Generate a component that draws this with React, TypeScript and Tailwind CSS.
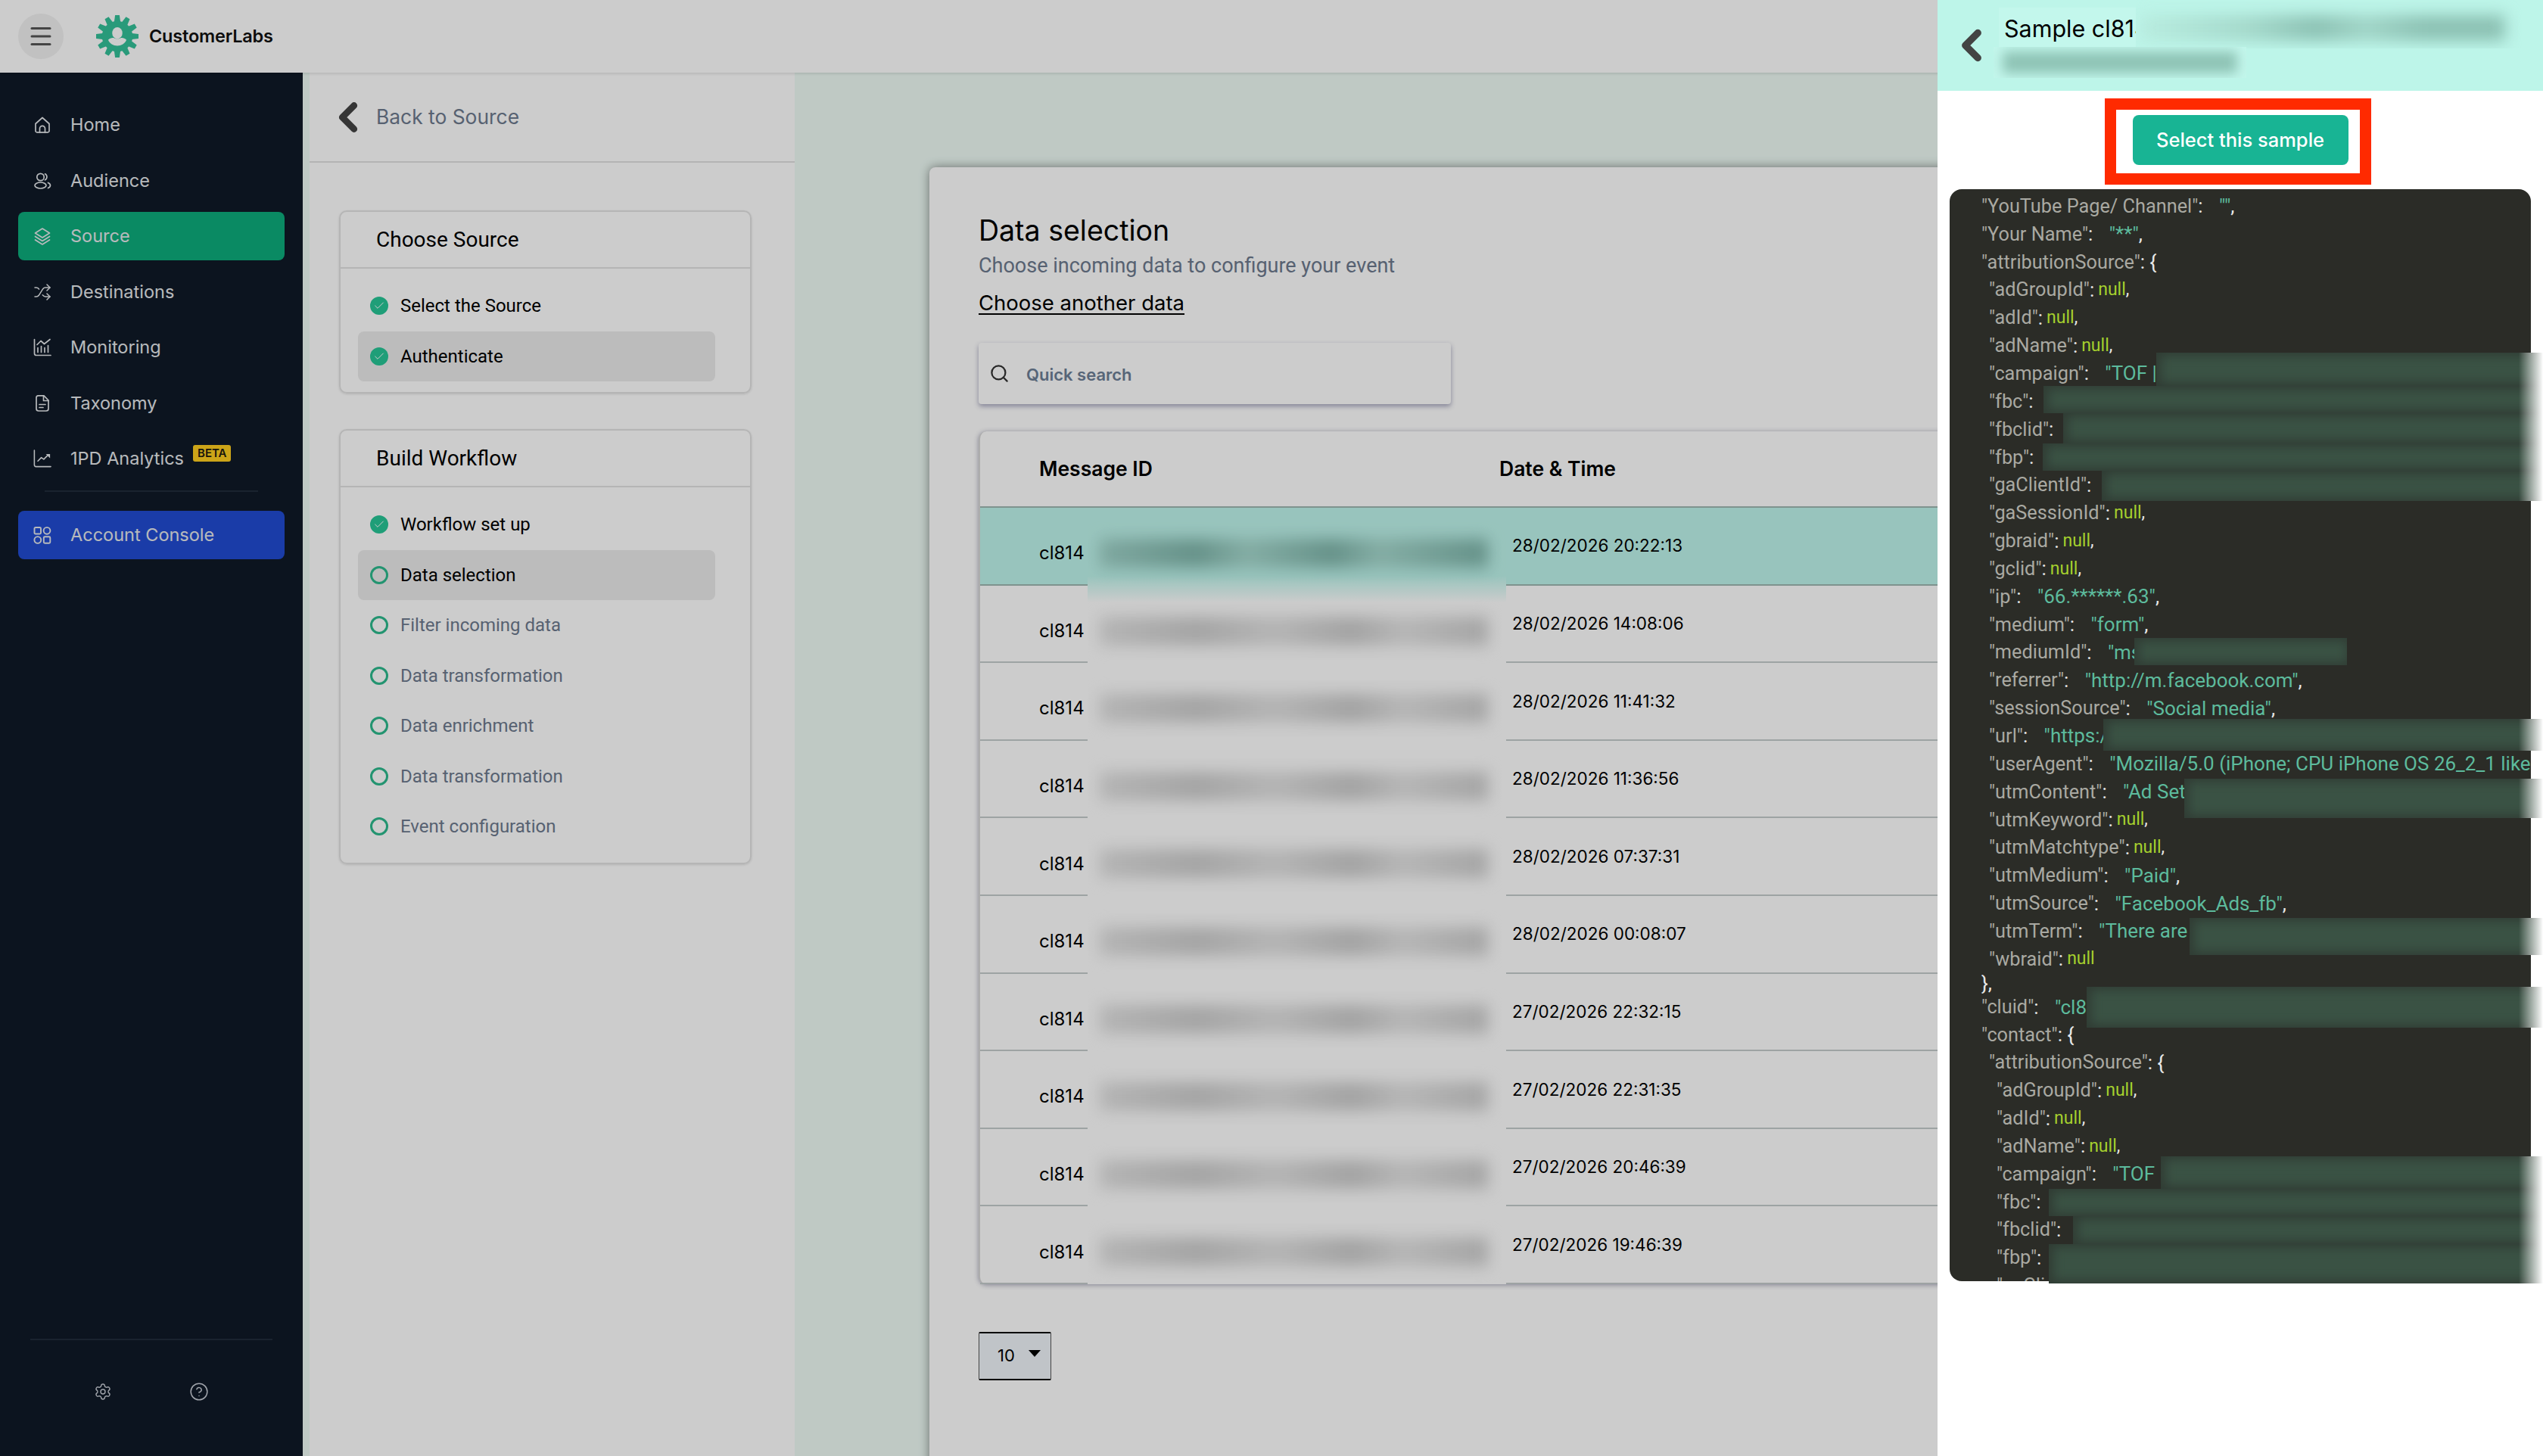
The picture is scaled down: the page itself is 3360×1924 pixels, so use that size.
import React from "react";
import { Settings, CircleHelp, Search, Menu, ChevronLeft, Check, Shuffle } from "lucide-react";

type Line = { i: number; k?: string; v?: string; t?: "s" | "n" | "o" | "b"; raw?: string; h?: string };

const json: Line[] = [
  { i: 0, k: "YouTube Page/ Channel", v: '""', t: "s" },
  { i: 0, k: "Your Name", v: '"**"', t: "s" },
  { i: 0, k: "attributionSource", t: "o" },
  { i: 1, k: "adGroupId", t: "n" },
  { i: 1, k: "adId", t: "n" },
  { i: 1, k: "adName", t: "n" },
  { i: 1, k: "campaign", v: '"TOF |', t: "b" },
  { i: 1, k: "fbc", t: "b" },
  { i: 1, k: "fbclid", t: "b" },
  { i: 1, k: "fbp", t: "b" },
  { i: 1, k: "gaClientId", t: "b" },
  { i: 1, k: "gaSessionId", t: "n" },
  { i: 1, k: "gbraid", t: "n" },
  { i: 1, k: "gclid", t: "n" },
  { i: 1, k: "ip", v: '"66.******.63"', t: "s" },
  { i: 1, k: "medium", v: '"form"', t: "s" },
  { i: 1, k: "mediumId", v: '"ms', t: "b" },
  { i: 1, k: "referrer", v: '"http://m.facebook.com"', t: "s" },
  { i: 1, k: "sessionSource", v: '"Social media"', t: "s" },
  { i: 1, k: "url", v: '"https:/', t: "b" },
  { i: 1, k: "userAgent", v: '"Mozilla/5.0 (iPhone; CPU iPhone OS 26_2_1 like', t: "b" },
  { i: 1, k: "utmContent", v: '"Ad Set', t: "b" },
  { i: 1, k: "utmKeyword", t: "n" },
  { i: 1, k: "utmMatchtype", t: "n" },
  { i: 1, k: "utmMedium", v: '"Paid"', t: "s" },
  { i: 1, k: "utmSource", v: '"Facebook_Ads_fb"', t: "s" },
  { i: 1, k: "utmTerm", v: '"There are', t: "b" },
  { i: 1, k: "wbraid", v: "null", t: "n" },
  { i: 0, raw: "}," },
  { i: 0, k: "cluid", v: '"cl8', t: "b", h: "h-[36px]" },
  { i: 0, k: "contact", t: "o" },
  { i: 1, k: "attributionSource", t: "o" },
  { i: 2, k: "adGroupId", t: "n" },
  { i: 2, k: "adId", t: "n" },
  { i: 2, k: "adName", t: "n" },
  { i: 2, k: "campaign", v: '"TOF', t: "b" },
  { i: 2, k: "fbc", t: "b" },
  { i: 2, k: "fbclid", t: "b" },
  { i: 2, k: "fbp", t: "b" },
  { i: 2, k: "gaClientId", t: "b" },
];

// redaction masks: x, y, w, h measured from the drawer's top-left
const masks = [
  { x: 289, y: 466, w: 511, h: 44 },
  { x: 140, y: 510, w: 660, h: 36 },
  { x: 166, y: 546, w: 634, h: 40 },
  { x: 139, y: 586, w: 661, h: 36 },
  { x: 217, y: 622, w: 583, h: 40 },
  { x: 260, y: 843, w: 281, h: 36, short: true },
  { x: 219, y: 950, w: 581, h: 42 },
  { x: 326, y: 1029, w: 474, h: 52 },
  { x: 333, y: 1213, w: 467, h: 49 },
  { x: 197, y: 1304, w: 603, h: 54 },
  { x: 295, y: 1528, w: 505, h: 43 },
  { x: 147, y: 1571, w: 653, h: 36 },
  { x: 179, y: 1607, w: 621, h: 37 },
  { x: 147, y: 1644, w: 653, h: 52 },
];

const rows = [
  "28/02/2026 20:22:13",
  "28/02/2026 14:08:06",
  "28/02/2026 11:41:32",
  "28/02/2026 11:36:56",
  "28/02/2026 07:37:31",
  "28/02/2026 00:08:07",
  "27/02/2026 22:32:15",
  "27/02/2026 22:31:35",
  "27/02/2026 20:46:39",
  "27/02/2026 19:46:39",
];

function Icon({ children }: { children: React.ReactNode }) {
  return (
    <svg viewBox="0 0 24 24" fill="none" stroke="currentColor" strokeWidth="1.7" strokeLinecap="round" strokeLinejoin="round" className="w-[26px] h-[26px]">
      {children}
    </svg>
  );
}

const HomeIcon = () => (
  <Icon>
    <path d="M3 10.500 12 2.500l9 8V20a1.800 1.800 0 0 1-1.800 1.800H4.800A1.800 1.800 0 0 1 3 20z" />
    <path d="M8.500 21.800v-5a3.500 3.500 0 0 1 7 0v5" />
  </Icon>
);
const AudienceIcon = () => (
  <Icon>
    <circle cx="9.500" cy="7" r="4.700" />
    <ellipse cx="9.500" cy="18" rx="7.500" ry="4" />
    <path d="M15.500 2.800a4.500 4.500 0 0 1 0 8" />
    <path d="M19.500 14.500c2 .8 3 2.100 3 3.500s-1 2.700-3 3.500" />
  </Icon>
);
const SourceIcon = () => (
  <Icon>
    <path d="M12 2 21.500 8 12 14 2.500 8z" />
    <path d="M2.500 12.500 12 18.500l9.500-6" />
    <path d="M2.500 17 12 23l9.500-6" />
  </Icon>
);
const MonitorIcon = () => (
  <Icon>
    <path d="M1.500 1.500V20a2.500 2.500 0 0 0 2.500 2.500h19" />
    <path d="M6 18.500v-6M10.500 18.500v-8M15 18.500v-6M19.500 18.500v-9" />
    <path d="M5 8.500 10 3.500l4.500 4L22 1.500" />
  </Icon>
);
const TaxonomyIcon = () => (
  <Icon>
    <path d="M6.500 1.800h7.500L20 8v11a3 3 0 0 1-3 3H7a3 3 0 0 1-3-3V4.500a2.700 2.700 0 0 1 2.500-2.700z" />
    <path d="M13.500 2v6.500H20" />
    <path d="M8 13.500h8M8 17.500h5" />
  </Icon>
);
const AnalyticsIcon = () => (
  <svg viewBox="0 0 26 26" fill="none" stroke="currentColor" strokeWidth="1.7" strokeLinecap="round" strokeLinejoin="round" className="w-[28px] h-[28px]">
    <path d="M1.500 1v21a2.500 2.500 0 0 0 2.500 2.500h21" />
    <path d="M6.500 16.500l5-5 3.500 2.500 6-6" />
    <path d="M18 6.500h6v6z" fill="currentColor" stroke="none" />
  </svg>
);
const ConsoleIcon = () => (
  <svg viewBox="0 0 24 24" fill="none" stroke="currentColor" strokeWidth="1.9" className="w-[25px] h-[25px]">
    <rect x="1.500" y="1.500" width="8.500" height="8.500" rx="1.500" />
    <circle cx="18" cy="5.800" r="4.400" />
    <circle cx="5.800" cy="18" r="4.400" />
    <rect x="13.800" y="13.800" width="8.500" height="8.500" rx="1.500" />
  </svg>
);

function GearLogo() {
  const teeth = [0, 30, 60, 90, 120, 150, 180, 210, 240, 270, 300, 330];
  return (
    <svg viewBox="0 0 58 60" className="w-[56px] h-[58px]">
      {teeth.map((a) => (
        <path key={a} d="M24.500 12 26 1h6l1.500 11z" fill="#34c199" transform={`rotate(${a} 29 30)`} />
      ))}
      <circle cx="29" cy="30" r="21" fill="#34c199" />
      <ellipse cx="29" cy="25.500" rx="7" ry="8" fill="#ffffff" />
      <path d="M16.500 35c2.500-2.800 6-3.500 8.500-2.500 2.500 1.200 5.500 1.200 8 0 2.500-1 6-.3 8.500 2.500-2 5-7 8-12.500 8s-10.500-3-12.500-8z" fill="#ffffff" />
    </svg>
  );
}

function NavItem({ icon, label, tone, beta }: { icon: React.ReactNode; label: string; tone?: string; beta?: boolean }) {
  return (
    <div className={`flex items-center h-[64px] rounded-[8px] pl-[20px] gap-[25px] text-[23.500px] text-[#e6e9ec] ${tone ?? ""}`}>
      <span className="w-[24px] h-[28px] flex items-center justify-center shrink-0">{icon}</span>
      <span>{label}</span>
      {beta && (
        <span className="-mt-[14px] -ml-[13px] px-[6px] h-[22px] rounded-[3px] bg-[#ffce1f] text-[#1c1a10] text-[15px] leading-[22px] font-semibold">BETA</span>
      )}
    </div>
  );
}

function Step({ label, state, active }: { label: string; state: "done" | "current" | "todo"; active?: boolean }) {
  return (
    <div className={`flex items-center h-[66.500px] w-[472px] rounded-[8px] pl-[16px] gap-[16px] font-['Roboto',sans-serif] text-[24px] ${active ? "bg-[#ebebeb]" : ""} ${state === "todo" ? "text-[#6d7a8e]" : "text-black"}`}>
      {state === "done" ? (
        <span className="w-[24px] h-[24px] rounded-full bg-[#27c697] flex items-center justify-center">
          <Check className="w-[16px] h-[16px] text-white" strokeWidth={1.5} />
        </span>
      ) : (
        <span className="w-[24px] h-[24px] rounded-full border-[3px] border-[#2cb98d]" />
      )}
      <span>{label}</span>
    </div>
  );
}

function WorkCard({ title, className, children }: { title: string; className?: string; children: React.ReactNode }) {
  return (
    <div className={`w-[545px] rounded-[10px] border-2 border-[#e3e3e3] shadow-[0_1px_3px_rgba(0,0,0,0.12)] ${className ?? ""}`}>
      <div className="h-[75px] flex items-center pl-[47px] border-b-2 border-[#e3e3e3] font-['Roboto',sans-serif] text-[28px] text-black">{title}</div>
      <div className="pt-[16px] pl-[23px]">{children}</div>
    </div>
  );
}

export default function App() {
  return (
    <div className="relative w-[3360px] h-[1924px] overflow-hidden bg-white font-['Inter',sans-serif]">
      {/* Page */}
      <header className="h-[96px] flex items-center pl-[24px] bg-white shadow-[0_1px_4px_rgba(0,0,0,0.15)] relative">
        <span className="w-[60px] h-[60px] rounded-full bg-[#f2f2f2] flex items-center justify-center text-[#555]">
          <Menu className="w-[36px] h-[36px]" strokeWidth={2} />
        </span>
        <span className="ml-[43px]"><GearLogo /></span>
        <span className="ml-[14px] text-[23.500px] font-semibold text-[#111] tracking-[-0.2px]">CustomerLabs</span>
      </header>

      <div className="flex h-[1828px]">
        <aside className="w-[400px] shrink-0 bg-[#0f1927] flex flex-col px-[24px]">
          <nav className="flex flex-col gap-[9.500px] pt-[37px]">
            <NavItem label="Home" icon={<HomeIcon />} />
            <NavItem label="Audience" icon={<AudienceIcon />} />
            <NavItem label="Source" tone="bg-[#0dad7c]" icon={<SourceIcon />} />
            <NavItem label="Destinations" icon={<Shuffle className="w-[26px] h-[26px]" strokeWidth={1.5} />} />
            <NavItem label="Monitoring" icon={<MonitorIcon />} />
            <NavItem label="Taxonomy" icon={<TaxonomyIcon />} />
            <NavItem label="1PD Analytics" beta icon={<AnalyticsIcon />} />
          </nav>
          <div className="mx-[35px] mt-[10px] border-t-2 border-[#212c3b]" />
          <div className="mt-[25px]">
            <NavItem label="Account Console" tone="bg-[#214cd2]" icon={<ConsoleIcon />} />
          </div>
          <div className="mt-auto mx-[16px] border-t-2 border-[#212c3b]" />
          <div className="h-[153px] pt-[55px] pl-[100px] flex gap-[102px] text-[#c9ced6]">
            <Settings className="w-[24px] h-[24px] mt-[1px]" strokeWidth={1.4} />
            <CircleHelp className="w-[26px] h-[26px]" strokeWidth={1.4} />
          </div>
        </aside>

        <main className="flex-1 flex bg-[#effcf6] overflow-hidden">
          <section className="ml-[9px] w-[641px] shrink-0 bg-white">
            <div className="h-[119px] flex items-center pl-[20px] border-b-2 border-[#e0e0e0]">
              <ChevronLeft className="w-[62px] h-[62px] text-[#444]" strokeWidth={3.4} />
              <span className="ml-[6px] text-[26.400px] text-[#6d7a8e]">Back to Source</span>
            </div>
            <div className="pl-[39px] pt-[63px]">
              <WorkCard title="Choose Source" className="h-[242px]">
                <Step label="Select the Source" state="done" />
                <Step label="Authenticate" state="done" active />
              </WorkCard>
              <WorkCard title="Build Workflow" className="h-[575px] mt-[47px]">
                <Step label="Workflow set up" state="done" />
                <Step label="Data selection" state="current" active />
                <Step label="Filter incoming data" state="todo" />
                <Step label="Data transformation" state="todo" />
                <Step label="Data enrichment" state="todo" />
                <Step label="Data transformation" state="todo" />
                <Step label="Event configuration" state="todo" />
              </WorkCard>
            </div>
          </section>

          <section className="ml-[178px] mt-[125px] w-[1500px] h-[1800px] shrink-0 bg-white rounded-t-[8px] shadow-[0_0_14px_rgba(0,0,0,0.45)] pl-[65px]">
            <h1 className="mt-[62px] text-[37.500px] leading-[44px] text-black">Data selection</h1>
            <p className="mt-[2px] font-['Roboto',sans-serif] text-[27px] leading-[44px] text-[#6d7a8e]">Choose incoming data to configure your event</p>
            <a className="block mt-[9px] w-fit text-[27.500px] leading-[36px] text-black underline underline-offset-4">Choose another data</a>
            <div className="mt-[35px] w-[624px] h-[81px] flex items-center pl-[14px] rounded-[4px] bg-white shadow-[0_3px_6px_rgba(60,60,110,0.45)]">
              <Search className="w-[27px] h-[27px] text-[#333]" strokeWidth={2} />
              <span className="ml-[22px] mt-[4px] text-[22px] font-semibold text-[#6d7f96]">Quick search</span>
            </div>

            <div className="relative mt-[36px] w-[1300px] rounded-[10px] bg-white border-l-2 border-[#d8d8d8] shadow-[0_1px_6px_rgba(50,50,90,0.45)]">
              <div className="h-[101px] flex items-center text-[26.500px] font-semibold text-black border-b-2 border-[#9fb8b2]">
                <span className="ml-[78px] w-[608px]">Message ID</span>
                <span>Date &amp; Time</span>
              </div>
              {rows.map((d, i) => (
                <div key={d} className={`h-[102.600px] flex items-center text-[22.500px] text-black border-b-2 ${i === 0 ? "bg-[#bff6ed] border-[#9fb8b2]" : "border-[#c5cccc]"}`}>
                  <span className="ml-[78px] w-[625px] pt-[20px] text-[24px]">cl814</span>
                  <span>{d}</span>
                </div>
              ))}
              <div className="absolute left-[142px] top-[101px] w-[553px] bottom-0 overflow-hidden bg-[linear-gradient(180deg,#bff6ed_0,#bff6ed_90px,#ffffff_125px)]">
                {rows.map((d, i) => (
                  <div key={d} className="h-[102.600px] pt-[41px]">
                    <div className={`ml-[16px] mr-[24px] h-[38px] blur-[10px] ${i === 0 ? "bg-[linear-gradient(90deg,#9fd2c8,#80b6ab_25%,#a5d8cd_38%,#80b6ab_60%,#a5d8cd_72%,#7eb5aa)]" : "bg-[linear-gradient(90deg,#e2e2e2,#cecece_25%,#e2e2e2_45%,#cccccc_65%,#e4e4e4_78%,#cecece)]"}`} />
                  </div>
                ))}
              </div>
            </div>

            <div className="mt-[63px] w-[96px] h-[64px] flex items-center pl-[24px] gap-[18px] bg-[#f0f5fa] border border-[#555] border-t-2 border-b-2 border-t-black border-b-black rounded-[2px] text-[22px] text-black">
              <span>10</span>
              <span className="-mt-[6px] w-0 h-0 border-x-[8px] border-x-transparent border-t-[9px] border-t-black" />
            </div>
          </section>
        </main>
      </div>

      {/* Dim layer */}
      <div className="absolute inset-0 z-10 bg-black/20" />

      {/* Drawer */}
      <aside className="absolute z-20 right-0 top-0 w-[800px] h-[1924px] bg-white overflow-hidden">
        <div className="relative h-[120px] bg-[#bdf5e9] flex items-start">
          <ChevronLeft className="mt-[27px] ml-[12px] w-[66px] h-[66px] text-[#444]" strokeWidth={3.4} />
          <span className="absolute left-[81px] top-[10px] h-[52px] w-[181px] pl-[7px] leading-[56px] bg-[#c3f7ec] text-[30.500px] text-black overflow-hidden whitespace-nowrap">Sample cl814</span>
          <div className="absolute left-[262px] top-0 right-0 h-[64px] overflow-hidden bg-[#bdf5e9]">
            <div className="mt-[20px] ml-[6px] mr-[50px] h-[34px] blur-[10px] bg-[linear-gradient(90deg,#b8ecdf,#a4d8ca_30%,#8cc1b3_48%,#a0d4c6_62%,#8cc1b3_78%,#8cc1b3)]" />
          </div>
          <div className="absolute left-[74px] top-[62px] w-[334px] h-[41px] overflow-hidden bg-[#c3f7ec]">
            <div className="mt-[6px] mx-[12px] h-[29px] blur-[8px] bg-[#8ec3b5]" />
          </div>
        </div>

        <div className="flex justify-center pt-[32px]">
          <button className="w-[285px] h-[66px] rounded-[8px] bg-[#18b494] text-white text-[25.500px] font-medium">Select this sample</button>
        </div>

        <div className="mt-[32px] mx-[16px] h-[1443px] rounded-[16px] bg-[#2b2c27] overflow-hidden pt-[4.500px] pl-[42px] font-['Roboto',sans-serif] text-[26px] whitespace-pre">
          {json.map((l, idx) => {
            const h = l.raw ? "h-[27px]" : l.h ?? "h-[36.850px]";
            return (
              <div key={idx} className={`flex items-center ${h}`}>
                {l.i === 1 && <span className="w-[10px]" />}
                {l.i === 2 && <span className="w-[20px]" />}
                {l.raw ? (
                  <span className="text-[#e8e8e8]">{l.raw}</span>
                ) : (
                  <>
                    <span className="text-[25.300px] text-[#a9a9a2]">"{l.k}"</span>
                    <span className="text-[#e8e8e8]">:</span>
                    {l.t === "o" && <span className="text-[#e8e8e8]"> {"{"}</span>}
                    {l.t === "n" && (
                      <>
                        <span className="ml-[5px] text-[23px] text-[#a5d02e]">null</span>
                        {l.v ? null : <span className="text-[#e8e8e8] text-[23px]">,</span>}
                      </>
                    )}
                    {l.t === "s" && (
                      <>
                        <span className="ml-[2px] text-[#5dbb9d]">{"   "}{l.v}</span>
                        <span className="text-[#e8e8e8]">,</span>
                      </>
                    )}
                    {l.t === "b" && <span className="ml-[2px] text-[#5dbb9d]">{"   "}{l.v}</span>}
                  </>
                )}
              </div>
            );
          })}
        </div>

        {/* redactions over the sample */}
        {masks.map((m) => (
          <div key={`${m.x}-${m.y}`} className="absolute overflow-hidden bg-[#303c34]" style={{ left: m.x, top: m.y, width: m.w, height: m.h }}>
            <div className="absolute left-[6px] right-0 top-[4px] bottom-[4px] bg-[#3a5244] blur-[7px]" />
            {!m.short && <div className="absolute right-0 top-0 bottom-0 w-[32px] bg-[linear-gradient(90deg,rgba(255,255,255,0),#ffffff)]" />}
          </div>
        ))}

        {/* red annotation round the button */}
        <div className="absolute left-[221px] top-[130px] w-[352px] h-[114px] border-[15px] border-[#ff2a00]" />
      </aside>
    </div>
  );
}
